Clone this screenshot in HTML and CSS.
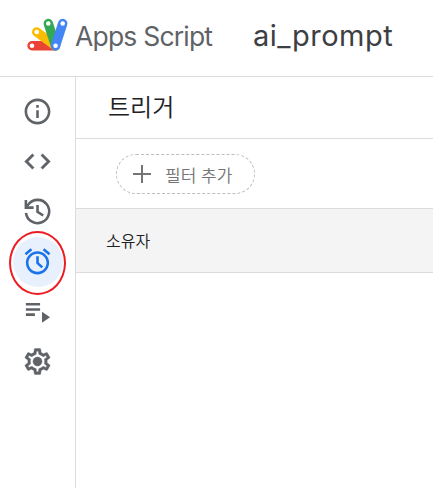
FILE: index.html
```html
<!DOCTYPE html>
<html lang="ko">
<head>
<meta charset="utf-8">
<title>ai_prompt</title>
<link rel="stylesheet" href="styles.css">
</head>
<body>
<header class="topbar">
  <svg class="logo" viewBox="26 17 44 35" aria-hidden="true">
    <g fill="none" stroke-linecap="round" stroke-width="9.4">
      <path stroke="#ea4335" d="M32 45.8H55.5"/>
      <path stroke="#fbbc04" d="M36.7 32L55.5 45.8"/>
      <path stroke="#34a853" d="M48.3 23.5L55.5 45.8"/>
      <path stroke="#4285f4" d="M62.7 23.5L55.5 45.8"/>
    </g>
    <g fill="#fff">
      <circle cx="32" cy="45.8" r="2.3"/><circle cx="36.7" cy="32" r="2.3"/><circle cx="48.3" cy="23.5" r="2.3"/><circle cx="62.7" cy="23.5" r="2.3"/><circle cx="55.6" cy="45.8" r="2.3"/>
    </g>
  </svg>
  <span class="product">Apps Script</span>
  <span class="project">ai_prompt</span>
</header>
<div class="body">
  <nav class="rail">
    <span class="item"><svg viewBox="0 0 24 24"><path d="M11 7h2v2h-2zm0 4h2v6h-2zm1-9C6.48 2 2 6.48 2 12s4.48 10 10 10 10-4.48 10-10S17.52 2 12 2zm0 18c-4.41 0-8-3.59-8-8s3.59-8 8-8 8 3.59 8 8-3.59 8-8 8z"/></svg></span>
    <span class="item"><svg class="bold" viewBox="0 0 24 24"><path d="M9.4 16.6L4.8 12l4.6-4.6L8 6l-6 6 6 6 1.4-1.4zm5.2 0l4.6-4.6-4.6-4.6L16 6l6 6-6 6-1.4-1.4z"/></svg></span>
    <span class="item"><svg viewBox="0 0 24 24"><g fill="none" stroke="#5f6368" stroke-width="2"><path d="M3.1 13A9 9 0 1 0 5 6.4L3 8.8"/><path d="M3 3v6h6M12 7v5.2l4.4 2.9"/></g></svg></span>
    <span class="item active"><svg viewBox="0 0 24 24"><path d="M13 8h-2v5.6l4 3.7 1.4-1.4-3.4-3.1zm4.337-6.19l4.607 3.845-1.28 1.535-4.61-3.843zm-10.674 0l1.282 1.536L3.337 7.19l-1.28-1.536zM12 4c-4.97 0-9 4.03-9 9s4.03 9 9 9 9-4.03 9-9-4.03-9-9-9zm0 16c-3.86 0-7-3.14-7-7s3.14-7 7-7 7 3.14 7 7-3.14 7-7 7z"/></svg></span>
    <span class="item"><svg viewBox="0 0 24 24"><path d="M3 5.4h11v2H3zM3 9.4h11v2H3zM3 13.4h7v2H3zM15.5 12.2v8.6l6.2-4.3z"/></svg></span>
    <span class="item"><svg class="bold" viewBox="0 0 24 24"><path d="M19.43 12.98c.04-.32.07-.64.07-.98s-.03-.66-.07-.98l2.11-1.65c.19-.15.24-.42.12-.64l-2-3.46a.5.5 0 0 0-.61-.22l-2.49 1c-.52-.4-1.08-.73-1.69-.98l-.38-2.65A.49.49 0 0 0 14 2h-4c-.25 0-.46.18-.49.42l-.38 2.65c-.61.25-1.17.59-1.69.98l-2.49-1a.5.5 0 0 0-.61.22l-2 3.46c-.13.22-.07.49.12.64l2.11 1.65c-.04.32-.07.65-.07.98s.03.66.07.98l-2.11 1.65c-.19.15-.24.42-.12.64l2 3.46c.12.22.39.3.61.22l2.49-1c.52.4 1.08.73 1.69.98l.38 2.65c.03.24.24.42.49.42h4c.25 0 .46-.18.49-.42l.38-2.65c.61-.25 1.17-.59 1.69-.98l2.49 1c.23.09.49 0 .61-.22l2-3.46a.5.5 0 0 0-.12-.64zM17.45 11.27c.04.31.05.52.05.73s-.02.43-.05.73l-.14 1.13.89.7 1.08.84-.7 1.21-1.27-.51-1.04-.42-.9.68c-.43.32-.84.56-1.25.73l-1.06.43-.16 1.13-.2 1.35h-1.4l-.19-1.35-.16-1.13-1.06-.43c-.43-.18-.83-.41-1.23-.71l-.91-.7-1.06.43-1.27.51-.7-1.21 1.08-.84.89-.7-.14-1.13c-.03-.31-.05-.54-.05-.74s.02-.43.05-.73l.14-1.13-.89-.7-1.08-.84.7-1.21 1.27.51 1.04.42.9-.68c.43-.32.84-.56 1.25-.73l1.06-.43.16-1.13.2-1.35h1.39l.19 1.35.16 1.13 1.06.43c.43.18.83.41 1.23.71l.91.7 1.06-.43 1.27-.51.7 1.21-1.07.85-.89.7z" fill-rule="evenodd"/><circle cx="12" cy="12" r="3.5"/></svg></span>
  </nav>
  <main class="main">
    <h1 class="title">트리거</h1>
    <div class="filters">
      <button class="chip"><svg viewBox="0 0 18 18"><path d="M9 0v18M0 9h18" stroke="#757575" stroke-width="2"/></svg><span>필터 추가</span></button>
    </div>
    <div class="thead"><span>소유자</span></div>
  </main>
</div>
</body>
</html>
```
FILE: styles.css
```css
* { box-sizing: border-box; }
body {
  margin: 0;
  height: 488px;
  display: flex;
  flex-direction: column;
  overflow: hidden;
  background: #fff;
  font-family: "Noto Sans CJK KR", sans-serif;
  font-weight: 350;
}
.topbar {
  height: 77px;
  flex: none;
  display: flex;
  align-items: flex-start;
  padding: 17px 0 0 26px;
  border-bottom: 1px solid #dadce0;
  white-space: nowrap;
  font-family: Inter, sans-serif;
  font-weight: 400;
}
.logo { width: 44px; height: 35px; flex: none; }
.product {
  width: 178px;
  margin-left: 5px;
  font-size: 26.5px;
  line-height: 39px;
  letter-spacing: -0.8px;
  color: #5f6368;
}
.project {
  font-size: 29px;
  line-height: 38px;
  letter-spacing: 0.5px;
  color: #3c4043;
}
.body { flex: 1; display: flex; min-height: 0; }
.rail {
  width: 76px;
  flex: none;
  display: flex;
  flex-direction: column;
  align-items: center;
  padding-top: 10px;
  border-right: 1px solid #dadce0;
}
.item {
  width: 50px;
  height: 50px;
  flex: none;
  display: flex;
  align-items: center;
  justify-content: center;
  border-radius: 50%;
}
.item svg { width: 31px; height: 31px; fill: #5f6368; margin-bottom: 0.4px; }
.item .bold { stroke: #5f6368; stroke-width: 0.3; }
.active { position: relative; background: #e8f0fe; }
.item.active svg { fill: #1a73e8; }
.active::after {
  content: "";
  position: absolute;
  inset: -6px -3.5px -8px;
  border: 2px solid #ed1c24;
  border-radius: 50%;
}
.main { flex: 1; }
.title {
  height: 62px;
  margin: 0;
  padding-left: 32px;
  border-bottom: 1px solid #dadce0;
  font-size: 24px;
  line-height: 57px;
  font-weight: 350;
  color: #202124;
}
.filters { height: 69px; padding: 15px 0 0 40px; }
.chip {
  width: 139px;
  height: 40px;
  display: flex;
  align-items: center;
  gap: 14px;
  padding: 0 0 0 16px;
  border: 1px dashed #bdbdbd;
  border-radius: 20px;
  background: #fff;
  font: 350 17px "Noto Sans CJK KR", sans-serif;
  color: #757575;
  white-space: nowrap;
}
.chip svg { width: 18px; height: 18px; flex: none; }
.thead {
  height: 65px;
  padding-left: 30px;
  border-top: 1px solid #dadce0;
  border-bottom: 1px solid #dadce0;
  background: #f4f4f4;
  font-size: 16px;
  line-height: 62px;
  color: #202124;
}
```
